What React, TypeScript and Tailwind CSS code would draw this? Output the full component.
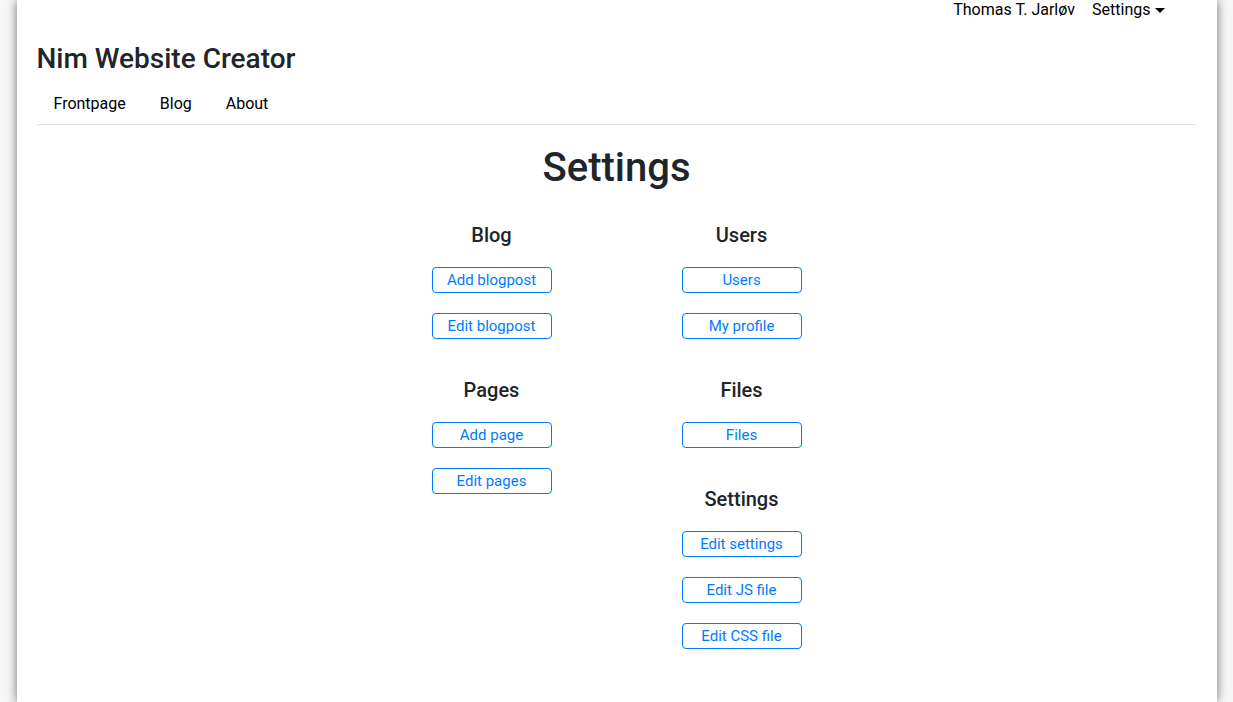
import React from 'react';

const sections = {
  left: [
    { title: 'Blog', buttons: ['Add blogpost', 'Edit blogpost'] },
    { title: 'Pages', buttons: ['Add page', 'Edit pages'] },
  ],
  right: [
    { title: 'Users', buttons: ['Users', 'My profile'] },
    { title: 'Files', buttons: ['Files'] },
    { title: 'Settings', buttons: ['Edit settings', 'Edit JS file', 'Edit CSS file'] },
  ],
};

function Section({ title, buttons }: { title: string; buttons: string[] }) {
  return (
    <div className="flex flex-col items-center mb-[39px]">
      <h5 className="text-[20px] leading-[24px] font-medium text-[#212529] mb-[20px]">{title}</h5>
      <div className="flex flex-col items-center gap-[20px]">
        {buttons.map((b) => (
          <a
            key={b}
            href="#"
            className="w-[120px] h-[26px] flex items-center justify-center border border-[#007bff] rounded-[4px] text-[#007bff] text-[15px] leading-none"
          >
            {b}
          </a>
        ))}
      </div>
    </div>
  );
}

export default function App() {
  return (
    <div className="min-h-screen bg-[#f7f7f7]" style={{ fontFamily: 'Roboto, "Liberation Sans", sans-serif' }}>
      <div className="w-[1200px] mx-auto min-h-screen bg-white shadow-[0_0_10px_rgba(0,0,0,0.55)] px-[20px]">
        {/* top user bar */}
        <div className="flex justify-end items-center h-[20px] pr-[32px] text-[16px] text-black">
          <span>Thomas T. Jarløv</span>
          <span className="ml-[17px] flex items-center">
            Settings
            <span className="ml-[4px] inline-block w-0 h-0 border-x-[5px] border-x-transparent border-t-[5px] border-t-black" />
          </span>
        </div>

        <h3 className="mt-[22px] text-[28px] leading-[34px] font-medium text-[#212529]">Nim Website Creator</h3>

        <nav className="mt-[8px] flex border-b border-[#dee2e6] text-[16px] text-black">
          <a href="#" className="px-[17px] py-[8px] leading-[24px]">Frontpage</a>
          <a href="#" className="px-[17px] py-[8px] leading-[24px]">Blog</a>
          <a href="#" className="px-[17px] py-[8px] leading-[24px]">About</a>
        </nav>

        <h1 className="mt-[19px] text-center text-[40px] leading-[48px] font-medium text-[#212529]">Settings</h1>

        <div className="mt-[31px] flex justify-center">
          <div className="w-[250px]">
            {sections.left.map((s) => (
              <Section key={s.title} {...s} />
            ))}
          </div>
          <div className="w-[250px]">
            {sections.right.map((s) => (
              <Section key={s.title} {...s} />
            ))}
          </div>
        </div>
      </div>
    </div>
  );
}
